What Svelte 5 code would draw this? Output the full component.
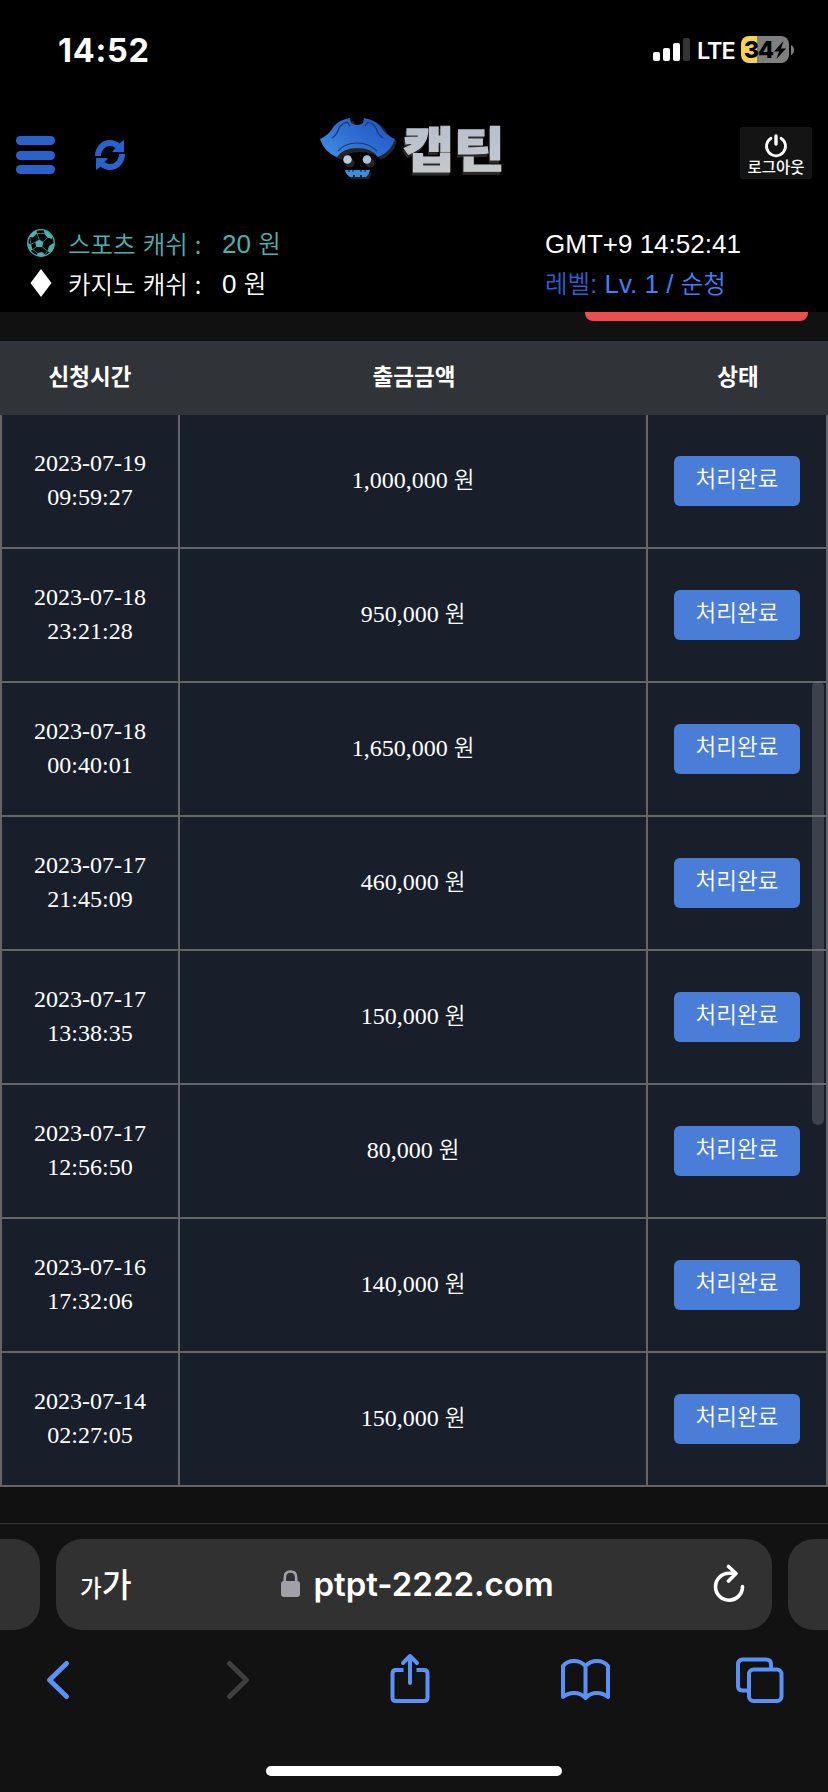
<script>
  let time = '14:52';
  let sportsCash = 20;
  let casinoCash = 0;

  let rows = [
    { date: '2023-07-19', time: '09:59:27', amount: 1000000 },
    { date: '2023-07-18', time: '23:21:28', amount: 950000 },
    { date: '2023-07-18', time: '00:40:01', amount: 1650000 },
    { date: '2023-07-17', time: '21:45:09', amount: 460000 },
    { date: '2023-07-17', time: '13:38:35', amount: 150000 },
    { date: '2023-07-17', time: '12:56:50', amount: 80000 },
    { date: '2023-07-16', time: '17:32:06', amount: 140000 },
    { date: '2023-07-14', time: '02:27:05', amount: 150000 }
  ];
</script>

<div class="screen">
  <header>
    <div class="status">
      <span class="clock">{time}</span>
      <div class="status-right">
        <svg class="signal" width="37" height="23" viewBox="0 0 37 23" fill="#fff">
          <rect x="0" y="14" width="7" height="9" rx="2" />
          <rect x="10" y="10" width="7" height="13" rx="2" />
          <rect x="20" y="5" width="7" height="18" rx="2" />
          <rect x="30" y="0" width="7" height="23" rx="2" fill="#333" />
        </svg>
        <span class="lte">LTE</span>
        <div class="battery">
          <span>34</span>
          <svg width="12" height="18" viewBox="0 0 12 18"><path d="M9.500 0 0 10.500H5L2.500 18 12 7.500H7Z" /></svg>
        </div>
        <svg class="nub" width="3" height="10" viewBox="0 0 3 10"><path d="M0 0Q3 1.500 3 5T0 10Z" fill="#7f7f7f" /></svg>
      </div>
    </div>

    <div class="topbar">
      <div class="left-icons">
        <div class="menu"><i></i><i></i><i></i></div>
        <svg width="30" height="30" viewBox="0 0 30 30" fill="#2a62cb">
          <path d="M0 16V14.500C1 6 7 0 15 0 18.500 0 22 1.300 24.500 3.500L28 .5Q29 0 29 1V12H18Q17 12 17.500 11L20.500 8Q18 6 15 6 8 6 6 14.500V16Z" />
          <path d="M30 14V15.500C29 24 23 30 15 30 11.500 30 8 28.700 5.500 26.500L2 29.500Q1 30 1 29V18H12Q13 18 12.500 19L9.500 22Q12 24 15 24 22 24 24 15.500V14Z" />
        </svg>
      </div>
      <svg class="logo" width="186" height="66" viewBox="0 0 186 66">
        <defs>
          <linearGradient id="hat" x1="0" y1="1" x2="1" y2="0.3">
            <stop offset="0" stop-color="#4292e0" />
            <stop offset="0.5" stop-color="#3070d2" />
            <stop offset="1" stop-color="#2456c4" />
          </linearGradient>
          <linearGradient id="silver" x1="0" y1="0" x2="0" y2="1">
            <stop offset="0" stop-color="#b0bfcf" />
            <stop offset="1" stop-color="#c9caca" />
          </linearGradient>
        </defs>
        <path d="M4 24Q14 19 19 10Q24 4 35 3L36 7Q43 12 49 7L50 3Q60 4 65 10Q70 19 78 23Q75 36 62 42Q56 34 41 34Q27 34 22 42Q8 36 4 24Z" fill="#252525" />
        <path d="M1 21Q10 17 15 8Q20 2 31 0L32 5Q38 9 44 5L45 0Q56 2 61 8Q66 17 76 21Q72 34 59 39Q53 30 38 30Q24 30 18 39Q5 34 1 21Z" fill="url(#hat)" />
        <path d="M13 20Q18 17 20 10Q22 6 28 4L31 8M64 20Q59 17 57 10Q55 6 49 4L46 8M19 33Q26 25 38 25T58 33" fill="none" stroke="#173b77" stroke-width="1.200" />
        <circle cx="31" cy="45" r="4.500" fill="#252525" /><circle cx="51" cy="45" r="4.500" fill="#252525" />
        <circle cx="28.500" cy="41.500" r="4.300" fill="#bbcbd8" /><circle cx="48" cy="41.500" r="4.300" fill="#abc0d8" />
        <path d="M28 55H53L50 61H32Z" fill="#202020" />
        <path d="M26 52H51Q50 57 47 59H43V57H41V59H36V57H34V59H31Q27 57 26 52Z" fill="#3d8ce0" />
        <path d="M30 52V54M34 52V54M42 52V54M46 52V54" stroke="#000" stroke-width="0.800" />
        <text class="brand" x="84" y="49" textLength="102" lengthAdjust="spacingAndGlyphs">캡틴</text>
      </svg>
      <button class="logout">
        <svg width="24" height="24" viewBox="0 0 24 24" fill="none" stroke="#fff" stroke-width="2.800" stroke-linecap="round">
          <path d="M7 4.200A9.500 9.500 0 1 0 17 4.200" />
          <path d="M12 2V10" stroke-width="3.400" />
        </svg>
        <span>로그아웃</span>
      </button>
    </div>

    <div class="info">
      <div class="cash">
        <div class="line sports">
          <svg width="28" height="28" viewBox="0 0 28 28">
            <circle cx="14" cy="14" r="13.300" fill="none" stroke="currentColor" stroke-width="1.300" />
            <path d="M12.200 10.500 16.300 13 15.300 18H9.300L8 13ZM3 6Q6 2.500 9.500 1.500L10 4.500 6 8.500 2.500 8ZM17 1.500Q22 2.500 25.500 7.500L25 10 20.500 8.500 17.500 5ZM.8 14 4 15.500 5.500 20.500 3.500 22Q.8 18 .8 14ZM10.500 24 15 23 18 25.500 17 27.200Q13 28 10 26.800ZM22 17 26.500 14 27.200 15Q27 20 23.500 23.500L20.500 22Z" fill="currentColor" />
            <path d="M12.200 10.500 10 4.500H17.500M16.300 13 20.500 8.500M15.300 18 20.500 22 18 25.500M9.300 18 5.500 20.500 10.500 24M8 13 4 15.500 2.500 8" fill="none" stroke="currentColor" stroke-width="0.700" />
          </svg>
          <span class="ko label">스포츠 캐쉬 :</span>
          <span class="value">{sportsCash} <span class="ko">원</span></span>
        </div>
        <div class="line">
          <svg width="28" height="28" viewBox="0 0 28 28"><path d="M14 0 24.500 14 14 28 3.500 14Z" fill="#fff" /></svg>
          <span class="ko label">카지노 캐쉬 :</span>
          <span class="value">{casinoCash} <span class="ko">원</span></span>
        </div>
      </div>
      <div class="member">
        <div class="line">GMT+9 14:52:41</div>
        <div class="line level"><span class="ko name">레벨</span><span class="name">:</span> Lv. 1 / <span class="ko">순청</span></div>
      </div>
    </div>
  </header>

  <main>
    <div class="red-button"></div>
    <table>
      <thead>
        <tr><th class="when">신청시간</th><th>출금금액</th><th class="state">상태</th></tr>
      </thead>
      <tbody>
        {#each rows as row}
          <tr>
            <td>{row.date}<br />{row.time}</td>
            <td>{row.amount.toLocaleString('en-US')} <span class="won">원</span></td>
            <td class="action"><span class="done">처리완료</span></td>
          </tr>
        {/each}
      </tbody>
    </table>
    <div class="scrollbar"></div>
  </main>

  <footer>
    <div class="tabs">
      <div class="tab prev"></div>
      <div class="tab address">
        <span class="text-size"><small>가</small>가</span>
        <div class="url">
          <svg width="19" height="27" viewBox="0 0 19 27">
            <path d="M3.800 12V7.500Q3.800 1.500 9.500 1.500T15.200 7.500V12" fill="none" stroke="#a1a0a8" stroke-width="2.600" />
            <rect x="0" y="11" width="19" height="16" rx="3" fill="#a1a0a8" />
          </svg>
          <span>ptpt-2222.com</span>
        </div>
        <svg class="reload" width="32" height="38" viewBox="0 0 32 38" fill="none" stroke="#fff" stroke-width="3.600" stroke-linecap="round" stroke-linejoin="round">
          <path d="M29.500 22.500A13.500 13.500 0 1 1 16 9.200H22M15.500 2.500 23 9.500 15.500 17" />
        </svg>
      </div>
      <div class="tab next"></div>
    </div>
    <nav>
      <svg viewBox="0 0 60 56"><path d="M38.500 11.500 21.500 28 38.500 44.500" stroke-width="5" /></svg>
      <svg viewBox="0 0 60 56" class="off"><path d="M25.500 11.500 42.500 28 25.500 44.500" stroke-width="5" /></svg>
      <svg viewBox="0 0 60 56"><path d="M24.500 18H17Q13.500 18 13.500 21.500V45.500Q13.500 49 17 49H45Q48.500 49 48.500 45.500V21.500Q48.500 18 45 18H37.500" stroke-linecap="butt" /><path d="M31 31V4M24 11 31 4 38 11" /></svg>
      <svg viewBox="0 0 60 56"><path d="M30.500 14Q26 9 19 9 12 9 8 14V45Q13 41 19 41 26 41 30.500 46 35 41 42 41 48 41 53 45V14Q49 9 42 9 35 9 30.500 14V46" /></svg>
      <svg viewBox="0 0 60 56"><path d="M17 38.500H12.500Q8 38.500 8 34V13Q8 7.500 12.500 7.500H36Q41 7.500 41 12V17" /><rect x="19" y="17.500" width="32.500" height="31.500" rx="4.500" /></svg>
    </nav>
    <div class="home"></div>
  </footer>
</div>

<style>
  :global(body) {
    background: #111;
  }
  .screen {
    width: 828px;
    height: 1792px;
    overflow: hidden;
    display: flex;
    flex-direction: column;
    background: #111;
    color: #fff;
    font-family: "Liberation Sans", "Noto Sans CJK KR", sans-serif;
  }
  header {
    height: 312px;
    background: #000;
    flex: none;
  }
  .status {
    height: 100px;
    box-sizing: border-box;
    padding: 0 34px 0 58px;
    display: flex;
    justify-content: space-between;
    align-items: center;
    font-family: Inter, sans-serif;
  }
  .clock {
    font-size: 32.5px;
    font-weight: 700;
    letter-spacing: 0.7px;
  }
  .status-right {
    display: flex;
    align-items: center;
  }
  .signal {
    margin-bottom: 1px;
  }
  .lte {
    margin: 1px 8px 0 7px;
    width: 36px;
    font-size: 23.5px;
    font-weight: 600;
    letter-spacing: -1px;
  }
  .battery {
    width: 48px;
    height: 27px;
    margin-bottom: 1px;
    border-radius: 8px;
    background: linear-gradient(90deg, #f8d548 16px, #7f7f7f 16px);
    display: flex;
    align-items: center;
    justify-content: center;
    gap: 1px;
    color: #000;
    font-size: 23.5px;
    font-weight: 800;
    letter-spacing: -1px;
  }
  .nub {
    margin-left: 2px;
  }
  .topbar {
    height: 110px;
    box-sizing: border-box;
    padding: 18px 16px 0;
    display: grid;
    grid-template-columns: 303px 186px 1fr;
    align-items: start;
  }
  .left-icons {
    display: flex;
    gap: 40px;
    align-items: center;
    padding-top: 18px;
  }
  .menu {
    width: 39px;
    height: 38px;
    display: flex;
    flex-direction: column;
    justify-content: space-between;
  }
  .menu i {
    height: 9px;
    border-radius: 5px;
    background: #2a62cb;
  }
  .logo {
    overflow: visible;
  }
  .brand {
    font-family: "Noto Sans CJK KR", sans-serif;
    font-weight: 900;
    font-size: 48px;
    fill: url(#silver);
    stroke: url(#silver);
    stroke-width: 1.2px;
    filter: drop-shadow(-1px 3px 0 #292a29);
  }
  .logout {
    justify-self: end;
    width: 72px;
    height: 52px;
    margin: 9px 0 0;
    padding: 7px 0 0;
    border: none;
    border-radius: 2px;
    background: #141414;
    color: #fff;
    display: flex;
    flex-direction: column;
    align-items: center;
    font: 500 15.5px/16px "Noto Sans CJK KR", sans-serif;
    white-space: nowrap;
  }
  .info {
    padding: 14px 27px 0;
    display: flex;
    font-size: 26px;
  }
  .cash {
    width: 518px;
  }
  .line {
    height: 40px;
    display: flex;
    align-items: center;
    line-height: 40px;
    white-space: pre;
  }
  .line svg {
    margin-top: -2px;
  }
  .member .line {
    display: block;
  }
  .sports {
    color: #4bb0b0;
  }
  .ko {
    font-family: "Noto Sans CJK KR", sans-serif;
    font-size: 24.5px;
    font-weight: 350;
    line-height: 30px;
  }
  .label {
    width: 154px;
    margin-left: 13px;
    word-spacing: 1.6px;
  }
  .level {
    color: #3b82f6;
  }
  .name {
    color: #2a62cb;
  }
  main {
    position: relative;
    height: 1211px;
    flex: none;
  }
  .red-button {
    width: 223px;
    height: 9px;
    margin-left: 585px;
    border-radius: 0 0 8px 8px;
    background: #ea4f48;
  }
  table {
    width: 828px;
    margin-top: 20px;
    border-collapse: separate;
    border-spacing: 0;
    table-layout: fixed;
    text-align: center;
  }
  th {
    height: 74px;
    padding: 0 0 6px;
    box-sizing: border-box;
    background: #303338;
    font: 700 22.5px/30px "Noto Sans CJK KR", sans-serif;
  }
  .when {
    width: 180px;
  }
  .state {
    width: 180px;
  }
  td {
    height: 134px;
    box-sizing: border-box;
    padding: 0 0 2px;
    border-right: 2px solid #656565;
    border-bottom: 2px solid #656565;
    background: #181f2b;
    font: 24px/34px "Liberation Serif", "Noto Sans CJK KR", serif;
  }
  td:first-child {
    border-left: 2px solid #656565;
  }
  .action {
    padding: 0;
  }
  .won {
    font-family: "Noto Sans CJK KR", sans-serif;
    font-size: 22.5px;
    font-weight: 350;
    line-height: 20px;
  }
  .done {
    display: block;
    width: 126px;
    height: 50px;
    margin: 0 auto;
    border-radius: 6px;
    background: #4a7dd8;
    font: 350 22.5px/43px "Noto Sans CJK KR", sans-serif;
  }
  .scrollbar {
    position: absolute;
    top: 369px;
    right: 4px;
    width: 12px;
    height: 444px;
    border-radius: 6px;
    background: rgba(128, 128, 136, 0.36);
  }
  footer {
    flex: 1;
    border-top: 1px solid #333;
    background: #121212;
    display: flex;
    flex-direction: column;
    align-items: center;
  }
  .tabs {
    width: 828px;
    margin-top: 15px;
    display: flex;
    gap: 16px;
  }
  .tab {
    height: 91px;
    background: #313131;
    border-radius: 26px;
  }
  .prev {
    width: 40px;
    border-radius: 0 26px 26px 0;
  }
  .next {
    width: 40px;
    border-radius: 26px 0 0 26px;
  }
  .address {
    width: 716px;
    box-sizing: border-box;
    padding: 0 27px 2px 24px;
    display: flex;
    align-items: center;
    justify-content: space-between;
  }
  .text-size {
    width: 42px;
    padding-top: 2px;
    font: 500 32.5px/40px "Noto Sans CJK KR", sans-serif;
    white-space: nowrap;
  }
  .text-size small {
    font-size: 23.5px;
  }
  .reload {
    margin-bottom: 2px;
  }
  .url {
    display: flex;
    align-items: center;
    gap: 13px;
    font: 600 33px/40px Inter, sans-serif;
  }
  .url span {
    padding-top: 1px;
  }
  nav {
    width: 762px;
    margin: 22px 10px 0 0;
    display: flex;
    justify-content: space-between;
  }
  nav svg {
    width: 60px;
    height: 56px;
    fill: none;
    stroke: #5a91f7;
    stroke-width: 4;
    stroke-linecap: round;
    stroke-linejoin: round;
  }
  nav .off {
    stroke: #3f3f3f;
  }
  .home {
    width: 296px;
    height: 10px;
    margin-top: 58px;
    border-radius: 5px;
    background: #fff;
  }
</style>
